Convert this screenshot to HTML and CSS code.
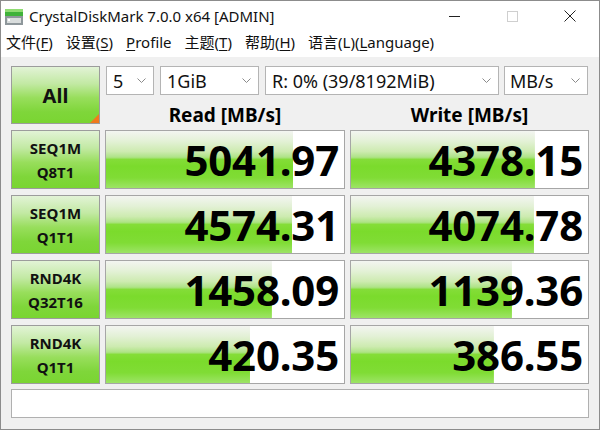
FILE: index.html
```html
<!DOCTYPE html>
<html lang="zh-CN">
<head>
<meta charset="utf-8">
<title>CrystalDiskMark 7.0.0 x64 [ADMIN]</title>
<link rel="stylesheet" href="styles.css">
</head>
<body>
<div class="window">
  <header class="titlebar">
    <svg class="app-icon" width="20" height="18" viewBox="0 0 20 18">
      <rect x="1" y="1" width="18" height="7" fill="#3fb23a"/>
      <rect x="1" y="1" width="18" height="3" fill="#8fdc72"/>
      <rect x="1" y="8" width="18" height="9" fill="#8e979b"/>
      <rect x="3" y="10" width="14" height="5" fill="#d9dddd"/>
      <rect x="4" y="11" width="2" height="2" fill="#ffffff"/>
    </svg>
    <span class="title">CrystalDiskMark 7.0.0 x64 [ADMIN]</span>
    <div class="controls">
      <span class="ctl"><svg width="11" height="11" viewBox="0 0 11 11"><path d="M0 5.5h11" stroke="#222" stroke-width="1"/></svg></span>
      <span class="ctl"><svg width="11" height="11" viewBox="0 0 11 11"><rect x="0.5" y="0.5" width="10" height="10" fill="none" stroke="#cfcfcf"/></svg></span>
      <span class="ctl"><svg width="12" height="12" viewBox="0 0 12 12"><path d="M0.5 0.5L11.5 11.5M11.5 0.5L0.5 11.5" stroke="#222" stroke-width="1"/></svg></span>
    </div>
  </header>
  <nav class="menubar">
    <span class="mi">文件(<u>F</u>)</span>
    <span class="mi">设置(<u>S</u>)</span>
    <span class="mi"><u>P</u>rofile</span>
    <span class="mi">主题(<u>T</u>)</span>
    <span class="mi">帮助(<u>H</u>)</span>
    <span class="mi">语言(L)(<u>L</u>anguage)</span>
  </nav>
  <main class="panel">
    <div class="grid">
      <div class="btn all">All<span class="corner"></span></div>
      <div class="top">
        <div class="selects">
          <div class="combo c-count"><span>5</span><svg class="chev" width="9" height="5" viewBox="0 0 9 5"><path d="M0.5 0.5L4.5 4.5L8.5 0.5" fill="none" stroke="#8a8a8a"/></svg></div>
          <div class="combo c-size"><span>1GiB</span><svg class="chev" width="9" height="5" viewBox="0 0 9 5"><path d="M0.5 0.5L4.5 4.5L8.5 0.5" fill="none" stroke="#8a8a8a"/></svg></div>
          <div class="combo c-drive"><span>R: 0% (39/8192MiB)</span><svg class="chev" width="9" height="5" viewBox="0 0 9 5"><path d="M0.5 0.5L4.5 4.5L8.5 0.5" fill="none" stroke="#8a8a8a"/></svg></div>
          <div class="combo c-unit"><span>MB/s</span><svg class="chev" width="9" height="5" viewBox="0 0 9 5"><path d="M0.5 0.5L4.5 4.5L8.5 0.5" fill="none" stroke="#8a8a8a"/></svg></div>
        </div>
        <div class="heads">
          <div class="head">Read [MB/s]</div>
          <div class="head">Write [MB/s]</div>
        </div>
      </div>

      <div class="btn label">SEQ1M<br>Q8T1</div>
      <div class="cell" style="--fill:78.6%">5041.97</div>
      <div class="cell" style="--fill:77.6%">4378.15</div>

      <div class="btn label">SEQ1M<br>Q1T1</div>
      <div class="cell" style="--fill:78.2%">4574.31</div>
      <div class="cell" style="--fill:77.2%">4074.78</div>

      <div class="btn label">RND4K<br>Q32T16</div>
      <div class="cell" style="--fill:69.7%">1458.09</div>
      <div class="cell" style="--fill:67.9%">1139.36</div>

      <div class="btn label">RND4K<br>Q1T1</div>
      <div class="cell" style="--fill:60.5%">420.35</div>
      <div class="cell" style="--fill:60.3%">386.55</div>
    </div>
    <div class="status"></div>
  </main>
</div>
</body>
</html>
```
FILE: styles.css
```css
* { box-sizing: border-box; }
html, body { margin: 0; padding: 0; }
body {
  width: 600px;
  height: 430px;
  overflow: hidden;
  font-family: "Noto Sans", "Noto Sans CJK SC", sans-serif;
  color: #000;
  background: #fff;
}
.window {
  width: 600px;
  height: 430px;
  border: 1px solid #8c8c8c;
  display: flex;
  flex-direction: column;
  background: #f0f0f0;
}
.titlebar {
  height: 30px;
  flex: none;
  background: #fff;
  display: flex;
  align-items: center;
}
.app-icon { margin-left: 3px; margin-top: 1px; flex: none; }
.title {
  margin-left: 5px;
  font-size: 15px;
  color: #111;
  white-space: nowrap;
  padding-bottom: 1px;
}
.controls { margin-left: auto; display: flex; height: 100%; }
.ctl {
  width: 58px;
  display: flex;
  align-items: center;
  justify-content: center;
}
.menubar {
  height: 26px;
  flex: none;
  background: #fff;
  display: flex;
  align-items: center;
  padding-left: 5px;
  padding-bottom: 5px;
  gap: 13px;
  font-size: 15px;
  line-height: 20px;
  color: #111;
  white-space: nowrap;
}
.mi u { text-decoration-thickness: 1px; text-underline-offset: 2px; }
.panel {
  flex: 1;
  padding: 9px 9px 0 10px;
}
.grid {
  display: grid;
  grid-template-columns: 89px 240px 239px;
  grid-template-rows: 58px 59px 59px 59px 59px;
  column-gap: 5px;
  row-gap: 6px;
}
.btn {
  border: 1px solid #9c9c9c;
  background: linear-gradient(to bottom, #e2f3d6 0%, #c2e9a3 30%, #98de5c 55%, #7fd63a 80%, #7ad532 100%);
  display: flex;
  align-items: center;
  justify-content: center;
  text-align: center;
  font-weight: 700;
  color: #111;
}
.all {
  position: relative;
  font-size: 20px;
}
.corner {
  position: absolute;
  right: 0;
  bottom: 0;
  width: 0;
  height: 0;
  border-left: 9px solid transparent;
  border-bottom: 9px solid #f07a1e;
}
.label {
  font-size: 15px;
  line-height: 24px;
}
.top {
  grid-column: 2 / 4;
  display: flex;
  flex-direction: column;
}
.selects {
  height: 29px;
  display: flex;
  gap: 6px;
  padding-left: 1px;
}
.combo {
  height: 29px;
  background: #fff;
  border: 1px solid #b4b4b4;
  display: flex;
  align-items: center;
  justify-content: space-between;
  padding: 0 7px 0 6px;
  font-size: 18px;
  color: #111;
  white-space: nowrap;
}
.c-count { width: 48px; }
.c-size { width: 99px; }
.c-drive { width: 234px; }
.c-unit { width: 84px; margin-left: -1px; padding-left: 5px; }
.chev { flex: none; }
.heads {
  flex: 1;
  display: grid;
  grid-template-columns: 240px 239px;
  column-gap: 5px;
  align-items: start;
}
.head {
  text-align: center;
  font-weight: 700;
  font-size: 19px;
  line-height: 26px;
  padding-top: 7px;
}
.cell {
  border: 1px solid #a6a6a6;
  background-color: #fff;
  background-image: linear-gradient(to bottom, #f3f5f1 0%, #e3f1d6 18%, #cdebb0 36%, #aee386 46%, #84dd38 50%, #7bdb2c 62%, #80dc35 82%, #9de466 100%);
  background-size: var(--fill) 100%;
  background-repeat: no-repeat;
  display: flex;
  align-items: center;
  justify-content: flex-end;
  padding-right: 5px;
  font-size: 42px;
  font-weight: 700;
  letter-spacing: -0.2px;
  line-height: 1;
  color: #000;
}
.status {
  margin-top: 5px;
  height: 29px;
  background: #fff;
  border: 1px solid #b0b0b0;
  width: 578px;
}
```
